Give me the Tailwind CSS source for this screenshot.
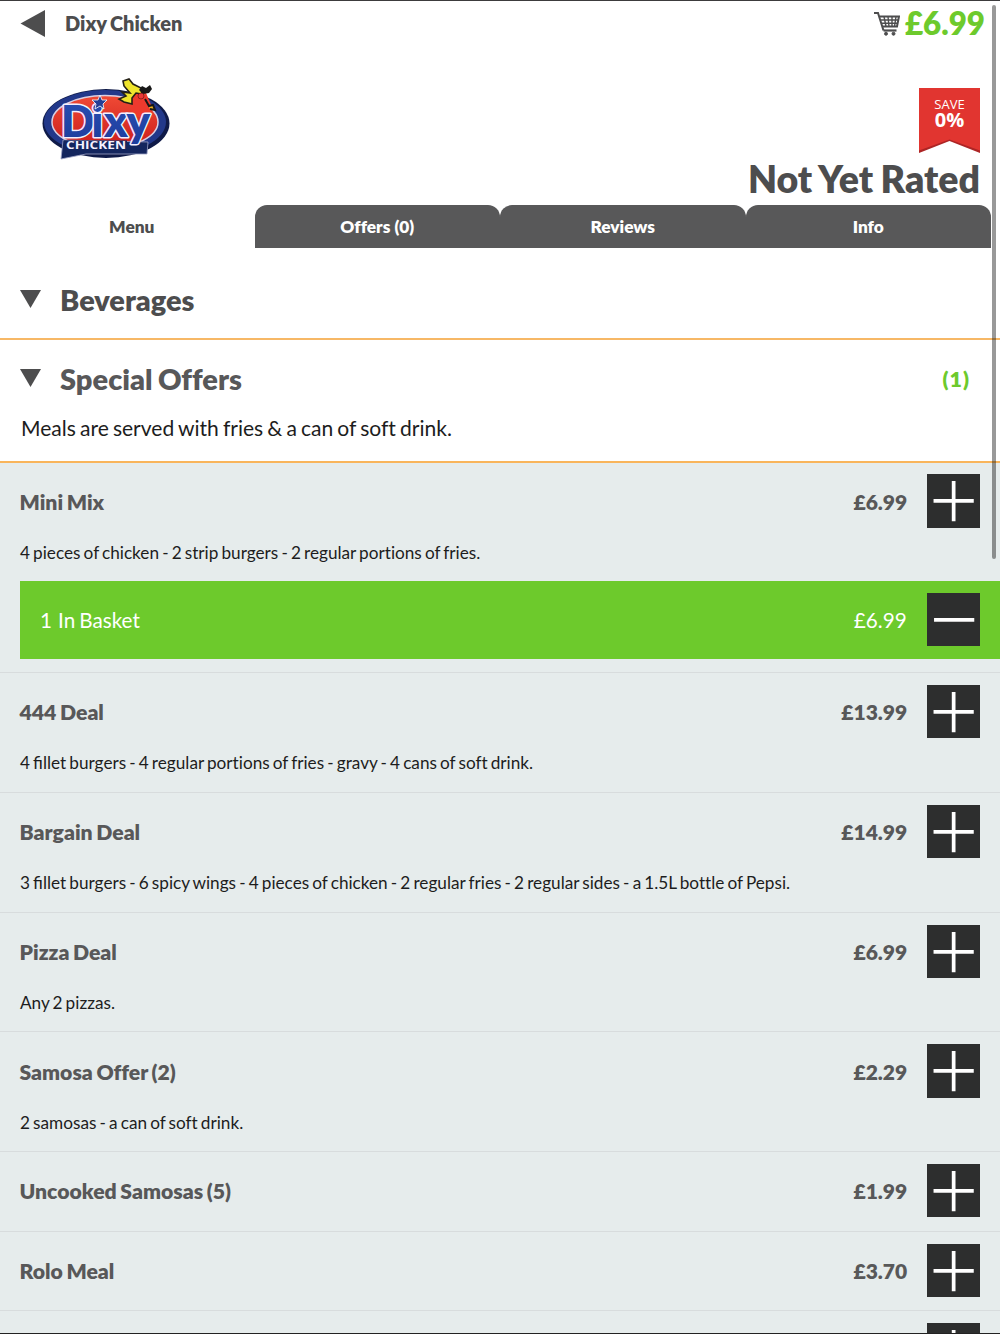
<!DOCTYPE html>
<html lang="en"><head><meta charset="utf-8"><title>Dixy Chicken</title>
<script src="https://cdn.jsdelivr.net/npm/@tailwindcss/browser@4"></script></head>
<body class="relative w-[1000px] h-[1334px] overflow-hidden bg-white font-['Lato',sans-serif] text-[#4d4d4e] [word-spacing:-0.08em] [font-variant-ligatures:none]">
<svg class="hidden">
<symbol id="plus" viewBox="0 0 53 53"><path d="M6.500 26.700H46.500M26.500 7V47" stroke="#fff" stroke-width="3.700"/></symbol>
<symbol id="minus" viewBox="0 0 53 53"><path d="M7 26.700H47" stroke="#fff" stroke-width="3.700"/></symbol>
</svg>
<header class="flex h-12 items-center border-t border-[#3c3b3d] pl-5 pr-[15px] pb-[3px]">
<svg class="w-[25px] h-[28px]" viewBox="0 0 25 28"><path d="M.5 14.500L25 1V28Z" fill="#4d4d4e"/></svg>
<h1 class="ml-5 text-[20px] leading-6 font-extrabold pb-px">Dixy Chicken</h1>
<svg class="ml-auto w-[26px] h-[25px]" viewBox="0 0 26 25" fill="none" stroke="#4d4d4e"><path d="M0 2H4L9.500 19.500" stroke-width="2"/><path d="M5.500 5.500H25L23 15.500H9" stroke-width="2"/><path d="M7 9H24M8 12.300H23.500M10 5.500L12 15.500M14 5.500L15 15.500M18 5.500L18 15.500M22 5.500L20.500 15.500" stroke-width="1.400"/><path d="M9.500 19.500H22.500" stroke-width="2.200"/><circle cx="12" cy="22.700" r="1.500" fill="#4d4d4e"/><circle cx="19.500" cy="22.700" r="1.500" fill="#4d4d4e"/></svg>
<span class="ml-[5px] text-[31.300px] leading-8 font-extrabold text-[#6dca2c]">£6.99</span>
</header>
<section class="flex h-[157px] justify-between pl-[40px] pr-5">
<svg class="mt-[27px] w-[132px] h-[88px]" viewBox="0 0 132 88">
<defs><linearGradient id="r" x2="0" y2="1"><stop stop-color="#f04a35"/><stop offset="1" stop-color="#c91c1c"/></linearGradient><linearGradient id="b" x2="0" y2="1"><stop stop-color="#2a50b4"/><stop offset="1" stop-color="#1d3c9c"/></linearGradient></defs>
<ellipse cx="66" cy="48.500" rx="63.500" ry="34.500" fill="#0f1a48"/>
<ellipse cx="65" cy="47" rx="61" ry="32" fill="#22388a"/>
<ellipse cx="65" cy="47" rx="53" ry="26.500" fill="url(#r)" stroke="#d9cfe2" stroke-width="1.500"/>
<path d="M91 36V21L97 16L106 18L112 32L113 42L98 42Z" fill="#ee3a2e"/>
<path d="M92 29L84 27L79 24L86 21L82 17L90 18L84 11L83 6L89 4L93 9L101 13L102 19L96 18L92 23Z" fill="#efe42c" stroke="#242016" stroke-width="1.600"/>
<path d="M99 15L102 11L106 13L110 10L112 14L109 18L103 19Z" fill="#181818"/><circle cx="101" cy="21" r="3" fill="#e93838" stroke="#5a1410" stroke-width=".6"/>
<path d="M105 24L109 31L113 30L115 35L110 34" fill="#efb421" stroke="#181818" stroke-width="2"/>
<path d="M23 65L108 67L107 79L46 79L21 84Z" fill="#14265e" stroke="#9ea3c6" stroke-width=".8"/>
<g font-family="Lato" font-weight="800" font-size="44" stroke-linejoin="round"><text x="21 51.500 64 86.500" y="62 62 62 62" fill="url(#b)" stroke="#f2efff" stroke-width="3" paint-order="stroke">Dixy</text></g>
<path d="M60 20L62 25L67 25L63 29L64 34L60 31L55 34L56 29L52 25L58 25Z" fill="#243e96" stroke="#fff" stroke-width=".8"/>
<path d="M24 65.500H87V76H24Z" fill="#14265e"/>
<text x="26" y="74" font-family="Open Sans" font-weight="700" font-size="10" fill="#f4f1ff" textLength="60" lengthAdjust="spacingAndGlyphs">CHICKEN</text>
</svg>
<div class="flex flex-col items-end pt-10">
<div class="relative h-[65px] w-[61px]">
<svg class="absolute inset-0 size-full" viewBox="0 0 61 65"><path d="M0 0H61V65L30.500 53L0 65Z" fill="#ad2525"/><path d="M0 0H61V62.500L30.500 51.500L0 62.500Z" fill="#e13530"/></svg>
<div class="relative pt-[8px] text-center font-['Open_Sans'] text-white"><p class="text-[13px] leading-4">SAVE</p><p class="text-[20px] leading-4 font-bold">0%</p></div>
</div>
<h2 class="mt-[3px] text-[37.500px] leading-[46px] font-extrabold whitespace-nowrap">Not Yet Rated</h2>
</div>
</section>
<nav class="flex h-[43px] pl-[9px] pr-[9px] text-[17.300px] leading-[43px] font-extrabold text-center [word-spacing:0]">
<div class="w-[245.500px]">Menu</div>
<div class="w-[245.500px] rounded-t-xl bg-[#585859] text-white">Offers (0)</div>
<div class="w-[245.500px] rounded-t-xl bg-[#585859] text-white">Reviews</div>
<div class="w-[245.500px] rounded-t-xl bg-[#585859] text-white">Info</div>
</nav>
<section class="flex h-[92px] items-start border-b-2 border-[#f7b866] px-5 pt-[35px]">
<svg class="mt-[7px] w-[21px] h-[18px]" viewBox="0 0 21 18"><path d="M0 0H21L10.500 18Z" fill="#4d4d4e"/></svg><h2 class="ml-[19px] text-[28.900px] leading-[33px] font-extrabold">Beverages</h2>
</section>
<section class="h-[123px] border-b-2 border-[#f9b55b] px-5 pt-[22px]">
<div class="flex items-start"><svg class="mt-[7px] w-[21px] h-[18px]" viewBox="0 0 21 18"><path d="M0 0H21L10.500 18Z" fill="#4d4d4e"/></svg><h2 class="ml-[19px] text-[29px] leading-[33px] font-extrabold text-[#585859]">Special Offers</h2><span class="ml-auto mr-[10px] text-[21.500px] leading-[35px] font-extrabold tracking-[1px] text-[#6dca2c]">(1)</span></div>
<p class="mt-[18px] text-[21.050px] leading-[26px] text-[#1d1d1d] pl-px">Meals are served with fries &amp; a can of soft drink.</p>
</section>
<main id="list" class="h-[871px] bg-[#e6ecec]"></main>
<div class="absolute left-[992px] top-[5px] h-[554px] w-[4px] rounded-full bg-black/40"></div>
<div class="absolute left-0 top-[1333px] h-px w-full bg-[#222]"></div>
<script>
const items=[
["Mini Mix","£6.99","4 pieces of chicken - 2 strip burgers - 2 regular portions of fries.",1],
["444 Deal","£13.99","4 fillet burgers - 4 regular portions of fries - gravy - 4 cans of soft drink."],
["Bargain Deal","£14.99","3 fillet burgers - 6 spicy wings - 4 pieces of chicken - 2 regular fries - 2 regular sides - a 1.5L bottle of Pepsi."],
["Pizza Deal","£6.99","Any 2 pizzas."],
["Samosa Offer (2)","£2.29","2 samosas - a can of soft drink."],
["Uncooked Samosas (5)","£1.99",""],
["Rolo Meal","£3.70",""],["","",""]];
const button=k=>`<svg class="ml-5 size-[53.300px] shrink-0 bg-[#2d2e2e]"><use href="#${k}"/></svg>`;
const fi=t=>t.replace(/fi/g,'<span class="[font-variant-ligatures:normal]">fi</span>');
document.getElementById("list").innerHTML=items.map(([n,p,d,q])=>`
<article class="border-b border-[#d8dcdd] ${q?"h-[210px]":d?"h-[119.750px]":"h-[79.500px]"}">
<div class="flex items-center ${q?"pt-[11.400px]":"pt-[12px]"} pl-[19.500px] pr-5 text-[21.200px] font-extrabold text-[#585859]"><h3 class="mr-auto pt-[3px]">${n}</h3><span class="-mr-[.5px] pt-px text-[21px]">${p}</span>${button("plus")}</div>
${d?`<p class="mt-[14px] px-5 text-[17.200px] leading-[21px] text-[#1d1d1d] whitespace-nowrap">${fi(d)}</p>`:""}
${q?`<div class="mt-[18.600px] ml-5 flex h-[78px] items-start pt-[11.500px] bg-[#6dca2c] px-5 text-[20.700px] leading-[54px] text-white"><span class="mr-[6px]">1</span><span class="mr-auto">In Basket</span><span>£6.99</span>${button("minus")}</div>`:""}
</article>`).join("");
</script>
</body></html>
